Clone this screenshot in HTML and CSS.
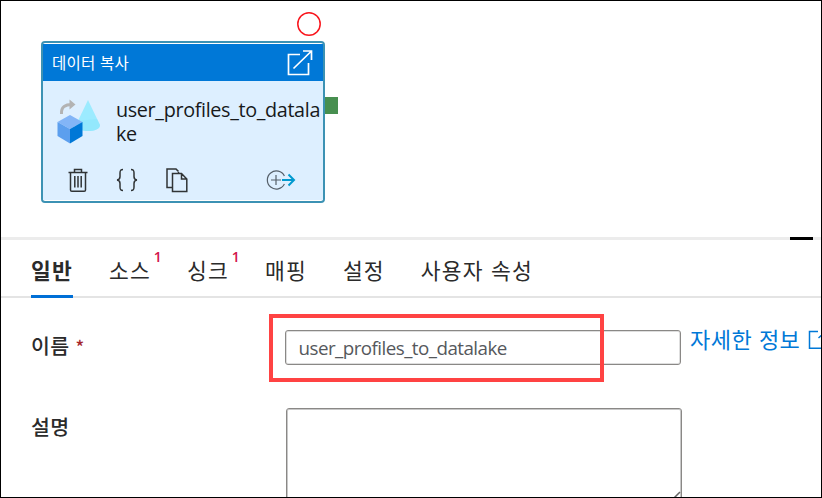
FILE: index.html
```html
<!DOCTYPE html>
<html lang="ko">
<head>
<meta charset="utf-8">
<title>데이터 복사</title>
<link rel="stylesheet" href="styles.css">
</head>
<body>
<div class="app">
  <section class="canvas">
    <svg class="breakpoint" width="26" height="26" viewBox="0 0 26 26" fill="none" stroke="#f9151c" stroke-width="1.500"><circle cx="13" cy="13" r="11.200"/></svg>
    <span class="port"></span>
    <article class="node">
      <header class="node-head">
        <span>데이터 복사</span>
        <svg width="28" height="28" viewBox="0 0 28 28" fill="none" stroke="#fff" stroke-width="1.7"><path d="M14 5.5H2.5V25.5H22.500V14M7.500 19.500L25 2.500M17 2H25.500V11"/></svg>
      </header>
      <div class="node-body">
        <svg width="46" height="46" viewBox="0 0 46 46">
          <path d="M33 1L45 26C45 34 22 34 21 26Z" fill="#9cebff"/>
          <path d="M21 26C22 34 45 34 45 26L42 20L21 22Z" fill="#8ee6fb" opacity=".6"/>
          <path d="M6.500 15C6 8 10 5.500 17 5.500" fill="none" stroke="#b3b3b3" stroke-width="3"/><path d="M14.500 .5L20.500 5.500L14.500 10.500Z" fill="#b3b3b3"/>
          <path d="M15 16L27.500 23L15 30L2.500 23Z" fill="#83b5f7"/>
          <path d="M2.500 23L15 30V44.500L2.500 37Z" fill="#5c9fee"/>
          <path d="M27.500 23L15 30V44.500L27.500 37Z" fill="#0078d7"/>
        </svg>
        <span class="node-name">user_profiles_to_datala<br>ke</span>
      </div>
      <footer class="node-actions">
        <svg width="20" height="25" viewBox="0 0 20 25" fill="none" stroke="#303436" stroke-width="1.500"><path d="M.5 4.500H19.500M6.500 4V1.500H13.500V4M2.500 5V22Q2.500 23.300 3.800 23.300H16.200Q17.500 23.300 17.500 22V5M6.800 8V19.500M10 8V19.500M13.200 8V19.500"/></svg>
        <svg width="22" height="24" viewBox="0 0 22 24" fill="none" stroke="#303436" stroke-width="1.500"><path d="M7 1.500C4 1.500 4 3 4 5V8.500C4 11 3 11.800 1 12C3 12.200 4 13 4 15.500V19C4 21 4 22.500 7 22.500M15 1.500C18 1.500 18 3 18 5V8.500C18 11 19 11.800 21 12C19 12.200 18 13 18 15.500V19C18 21 18 22.500 15 22.500"/></svg>
        <svg width="22" height="25" viewBox="0 0 22 25" fill="none" stroke="#303436" stroke-width="1.500"><path d="M6 19.500H1V1H10L12.500 3.500M12.500 4V5M6.500 5.500H15.500L20.800 11V23.500H6.500ZM15.500 5.500V11H20.800"/></svg>
        <svg class="connect" width="30" height="20" viewBox="0 0 30 20" fill="none"><path d="M18.400 6A9 9 0 1 0 18.400 14M10 5V15M5 10H15" stroke="#555f69" stroke-width="1.200"/><path d="M16 10H28M22.500 4.500L28 10L22.500 15.500" stroke="#0099cf" stroke-width="2"/></svg>
      </footer>
    </article>
  </section>
  <section class="panel">
    <div class="splitter"><span class="collapse"></span></div>
    <nav class="tabs">
      <span class="tab active">일반</span>
      <span class="tab">소스<sup class="count">1</sup></span>
      <span class="tab">싱크<sup class="count">1</sup></span>
      <span class="tab">매핑</span>
      <span class="tab">설정</span>
      <span class="tab">사용자 속성</span>
    </nav>
    <div class="form">
      <div class="row name-row">
        <label class="label">이름 <span class="required">*</span></label>
        <div class="input">user_profiles_to_datalake<span class="highlight"></span></div>
        <a class="more">자세한 정보<svg width="20" height="20" viewBox="0 0 20 20" fill="none" stroke="#0078d7" stroke-width="1.500"><path d="M10 1.500H1.500V18.300H18V9M10.500 8L18 1.500"/></svg></a>
      </div>
      <div class="row desc-row">
        <label class="label">설명</label>
        <div class="textarea"><svg class="grip" width="14" height="14" viewBox="0 0 14 14" stroke="#666" stroke-width="1.500"><path d="M1 13L13 1M7 13L13 7"/></svg></div>
      </div>
    </div>
  </section>
</div>
</body>
</html>
```

FILE: styles.css
```css
* { box-sizing: border-box; }

body {
  margin: 0;
  background: #fff;
  color: #2b2b2b;
  font-family: "Open Sans", "Noto Sans CJK KR", sans-serif;
}

svg { display: block; flex: none; }

.app {
  width: 822px;
  height: 498px;
  border: 1px solid #000;
  overflow: hidden;
}

.canvas { position: relative; height: 236px; }

.breakpoint {
  position: absolute;
  left: 295px;
  top: 10px;
}

.port {
  position: absolute;
  left: 324px;
  top: 96px;
  width: 13px;
  height: 17px;
  background: #478f50;
}

.node {
  position: absolute;
  left: 40px;
  top: 40px;
  width: 284px;
  height: 162px;
  padding: 1px 0 2px;
  border: 2px solid #3c92b4;
  border-radius: 4px;
  background: #fff;
}

.node-head {
  display: flex;
  align-items: center;
  justify-content: space-between;
  height: 37px;
  padding: 0 9px 0 9px;
  background: #0078d7;
  color: #fff;
  font: 400 15.5px/37px "Noto Sans CJK KR", sans-serif;
  letter-spacing: .2px;
}

.node-body {
  display: flex;
  height: 79px;
  padding: 18px 0 0 12px;
  background: #ddefff;
}

.node-name {
  margin: -1px 0 0 15px;
  color: #17191b;
  font-size: 19.8px;
  line-height: 24px;
  letter-spacing: -.35px;
  white-space: nowrap;
}

.node-actions {
  display: flex;
  align-items: center;
  height: 40px;
  padding: 0 27px 0 25px;
  gap: 28px;
  background: #ddefff;
}

.connect { margin-left: auto; }

.splitter {
  display: flex;
  justify-content: flex-end;
  height: 3px;
  padding-right: 8px;
  background: #ececec;
}

.collapse { width: 23px; height: 3px; background: #000; }

.tabs {
  display: flex;
  gap: 36px;
  height: 58px;
  padding-left: 30px;
  border-bottom: 2px solid #e4e4e4;
}

.tab {
  position: relative;
  height: 58px;
  font: 400 21.5px/59px "Noto Sans CJK KR", sans-serif;
  letter-spacing: 1.2px;
  white-space: nowrap;
}

.active { border-bottom: 3px solid #006fd6; font-weight: 700; }

.count {
  position: absolute;
  right: -12px;
  top: 8px;
  color: #d2144b;
  font: 600 14px/18px "Open Sans", sans-serif;
}

.row { display: flex; }
.name-row { height: 110px; padding: 32px 0 0 30px; }
.desc-row { padding-left: 30px; }

.label {
  width: 254px;
  flex: none;
  font: 500 20.5px/34px "Noto Sans CJK KR", sans-serif;
}

.name-row .label { line-height: 30px; letter-spacing: .3px; }
.desc-row .label { line-height: 37px; letter-spacing: .3px; }

.required { color: #a4262c; font-size: 18px; }

.input {
  position: relative;
  width: 396px;
  height: 35px;
  flex: none;
  padding-left: 12.5px;
  border: 1px solid #8a8886;
  border-radius: 3px;
  box-shadow: inset 0 0 0 1px #dedede;
  color: #55585c;
  font-size: 18.8px;
  line-height: 35px;
  letter-spacing: -.54px;
}

.highlight {
  position: absolute;
  left: -17px;
  top: -17px;
  width: 335px;
  height: 68px;
  border: 4px solid #ff4343;
}

.more {
  display: flex;
  flex: none;
  gap: 8px;
  margin: -9px 0 0 9px;
  color: #0078d7;
  font: 400 22px/34px "Noto Sans CJK KR", sans-serif;
  letter-spacing: .5px;
}

.more svg { margin-top: 9px; }

.textarea {
  display: flex;
  align-items: flex-end;
  justify-content: flex-end;
  width: 396px;
  height: 98px;
  flex: none;
  margin-left: 1px;
  border: 1px solid #8a8886;
  border-radius: 3px;
  box-shadow: inset 0 0 0 1px #c8c8c8;
}
```
